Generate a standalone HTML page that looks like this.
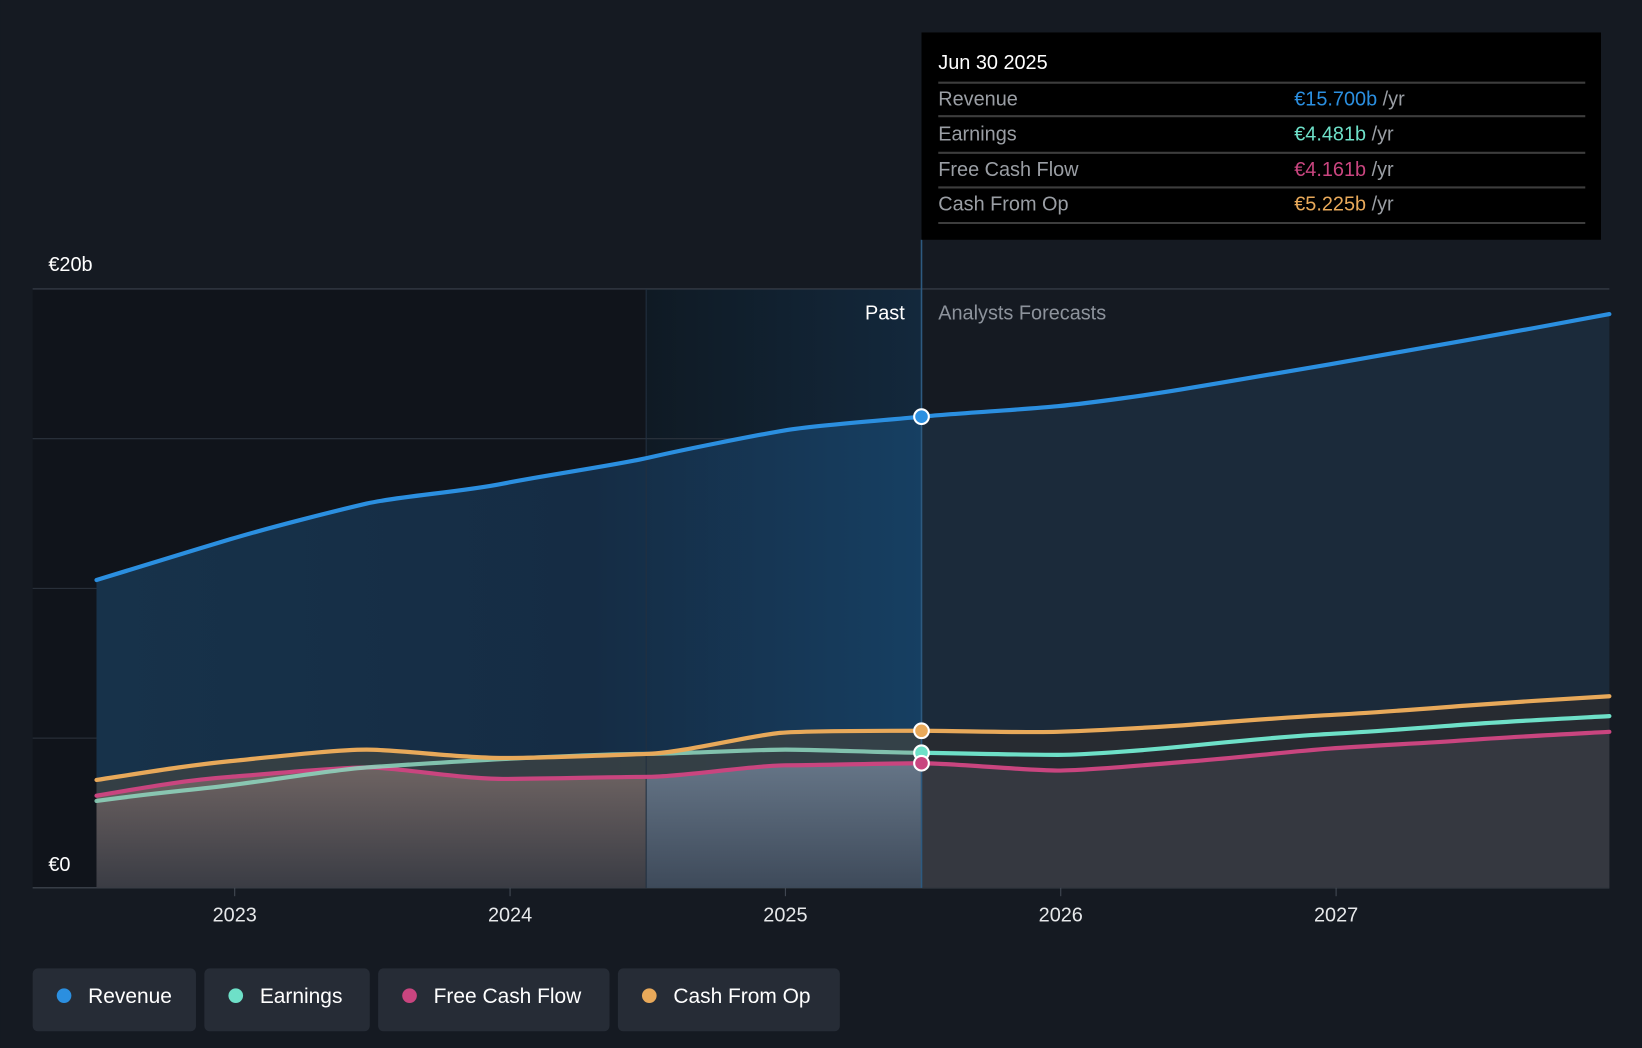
<!DOCTYPE html>
<html><head><meta charset="utf-8"><style>
html,body{margin:0;padding:0;background:#151a22;}
svg{display:block;font-family:"Liberation Sans",sans-serif;}
</style></head><body>
<svg width="1642" height="1048" viewBox="0 0 1568 1001" xmlns="http://www.w3.org/2000/svg">
<defs>
<linearGradient id="pg" x1="0" x2="1" y1="0" y2="0"><stop offset="0" stop-color="#0f1a24"/><stop offset="1" stop-color="#13283c"/></linearGradient>
<linearGradient id="rg" x1="92" x2="880" y1="0" y2="0" gradientUnits="userSpaceOnUse"><stop offset="0" stop-color="#17324a"/><stop offset="0.6" stop-color="#152c44"/><stop offset="1" stop-color="#163f62"/></linearGradient>
<linearGradient id="lg" x1="0" x2="0" y1="720" y2="848" gradientUnits="userSpaceOnUse"><stop offset="0" stop-color="#746866"/><stop offset="1" stop-color="#3a3c44"/></linearGradient>
<linearGradient id="lb" x1="0" x2="0" y1="720" y2="848" gradientUnits="userSpaceOnUse"><stop offset="0" stop-color="#68788a"/><stop offset="1" stop-color="#3e4a5a"/></linearGradient>
<clipPath id="p1"><rect x="0" y="0" width="617" height="1001"/></clipPath>
<clipPath id="p2"><rect x="617" y="0" width="263" height="1001"/></clipPath>
<clipPath id="past"><rect x="0" y="0" width="880" height="1001"/></clipPath>
<clipPath id="fut"><rect x="880" y="0" width="700" height="1001"/></clipPath>
<path id="rev" d="M92,554 L220,515 L350,481 L480,462 L620,437 L750,411 L880,398 L1010,388 L1140,370 L1270,348 L1400,325 L1537,300 L1537,848 L92,848Z"/>
<path id="cfo" d="M92,745 L220,727 L350,716 L480,724 L620,720 L745,700 L880,698 L1010,699 L1140,692 L1270,683 L1400,674 L1537,665 L1537,848 L92,848Z"/>
<path id="fcf" d="M92,760 L220,742 L350,733 L480,744 L620,742 L750,731 L880,729 L1010,736 L1140,727 L1270,715 L1400,707 L1537,699 L1537,848 L92,848Z"/>
</defs>
<rect width="1568" height="1001" fill="#151a22"/>
<rect x="31" y="276" width="586" height="572" fill="#10141b"/>
<rect x="617" y="276" width="263" height="572" fill="url(#pg)"/>
<g stroke="#2c333e" stroke-width="1">
<line x1="31" y1="276" x2="1537" y2="276" stroke="#3a414c"/>
<line x1="31" y1="419" x2="1537" y2="419"/>
<line x1="31" y1="562" x2="1537" y2="562"/>
<line x1="31" y1="705" x2="1537" y2="705"/>
<line x1="31" y1="848" x2="1537" y2="848" stroke="#444b55"/>
</g>
<use href="#rev" clip-path="url(#past)" fill="url(#rg)"/>
<use href="#rev" clip-path="url(#fut)" fill="#1b2a3a"/>
<use href="#cfo" clip-path="url(#past)" fill="#3a4244" opacity="0.85"/>
<use href="#cfo" clip-path="url(#fut)" fill="#272b31"/>
<use href="#fcf" clip-path="url(#p1)" fill="url(#lg)"/>
<use href="#fcf" clip-path="url(#p2)" fill="url(#lb)"/>
<use href="#fcf" clip-path="url(#fut)" fill="#353840"/>
<line x1="880" y1="229" x2="880" y2="848" stroke="#2d5a80" stroke-width="1.5"/>
<line x1="617" y1="276" x2="617" y2="848" stroke="#223040" stroke-width="1"/>
<g stroke="#444b55" stroke-width="1"><line x1="224" y1="848" x2="224" y2="856"/><line x1="487" y1="848" x2="487" y2="856"/><line x1="750" y1="848" x2="750" y2="856"/><line x1="1013" y1="848" x2="1013" y2="856"/><line x1="1276" y1="848" x2="1276" y2="856"/></g>
<g fill="none" stroke-width="4" stroke-linejoin="round" stroke-linecap="round">
<path d="M92,760 C150,750 180,745 220,742 S320,733 350,733 S440,744 480,744 S590,742 620,742 S720,731 750,731 S850,729 880,729 S980,736 1010,736 S1100,730 1140,727 S1230,718 1270,715 S1360,710 1400,707 S1500,701 1537,699" stroke="#c9457f"/>
<path clip-path="url(#past)" d="M92,765 C150,757 180,755 220,750 S320,735 350,733 S440,727 480,725 S590,720 620,720 S720,716 750,716 S850,719 880,719" stroke="#8fd8c0" opacity="0.85"/>
<path d="M880,719 S980,721 1010,721 S1100,716 1140,712 S1230,703 1270,701 S1360,695 1400,692 S1500,686 1537,684" stroke="#6ee0c8"/>
<path d="M92,745 C150,736 180,731 220,727 S320,716 350,716 S440,724 480,724 S590,721 620,720 S720,702 745,700 S850,698 880,698 S980,700 1010,699 S1100,695 1140,692 S1230,685 1270,683 S1360,677 1400,674 S1500,667 1537,665" stroke="#e8a95a"/>
<path d="M92,554 C150,536 180,527 220,515 S320,488 350,481 S440,470 480,462 S590,444 620,437 S720,416 750,411 S850,401 880,398 S980,391 1010,388 S1100,377 1140,370 S1230,355 1270,348 S1360,332 1400,325 S1500,307 1537,300" stroke="#2b8fe0"/>
</g>
<circle cx="880" cy="398" r="7" fill="#2b8fe0" stroke="#fff" stroke-width="2"/>
<circle cx="880" cy="698" r="7" fill="#e8a95a" stroke="#fff" stroke-width="2"/>
<circle cx="880" cy="719" r="7" fill="#6ee0c8" stroke="#fff" stroke-width="2"/>
<circle cx="880" cy="729" r="7" fill="#c9457f" stroke="#fff" stroke-width="2"/>
<g font-size="19" fill="#fff">
<text x="46" y="259">€20b</text>
<text x="46" y="832">€0</text>
<text x="864" y="305" text-anchor="end">Past</text>
<text x="896" y="305" fill="#8d939c">Analysts Forecasts</text>
<g text-anchor="middle" fill="#e6e8ea"><text x="224" y="880">2023</text><text x="487" y="880">2024</text><text x="750" y="880">2025</text><text x="1013" y="880">2026</text><text x="1276" y="880">2027</text></g>
</g>
<rect x="880" y="31" width="649" height="198" fill="#000"/>
<g stroke="#3d3d3d" stroke-width="2"><line x1="896" y1="79" x2="1514" y2="79"/><line x1="896" y1="111" x2="1514" y2="111"/><line x1="896" y1="146" x2="1514" y2="146"/><line x1="896" y1="179" x2="1514" y2="179"/><line x1="896" y1="213" x2="1514" y2="213"/></g>
<g font-size="19">
<text x="896" y="66" fill="#fff">Jun 30 2025</text>
<text x="896" y="101" fill="#9a9ea4">Revenue</text>
<text x="896" y="134" fill="#9a9ea4">Earnings</text>
<text x="896" y="168" fill="#9a9ea4">Free Cash Flow</text>
<text x="896" y="201" fill="#9a9ea4">Cash From Op</text>
<text x="1236" y="101"><tspan fill="#2b8fe0">€15.700b</tspan><tspan fill="#9a9ea4"> /yr</tspan></text>
<text x="1236" y="134"><tspan fill="#6ee0c8">€4.481b</tspan><tspan fill="#9a9ea4"> /yr</tspan></text>
<text x="1236" y="168"><tspan fill="#c9457f">€4.161b</tspan><tspan fill="#9a9ea4"> /yr</tspan></text>
<text x="1236" y="201"><tspan fill="#e8a95a">€5.225b</tspan><tspan fill="#9a9ea4"> /yr</tspan></text>
</g>
<g font-size="20" fill="#fff">
<rect x="31" y="925" width="156" height="60" rx="5" fill="#262c36"/><circle cx="61" cy="951" r="7" fill="#2b8fe0"/><text x="84" y="958">Revenue</text>
<rect x="195" y="925" width="158" height="60" rx="5" fill="#262c36"/><circle cx="225" cy="951" r="7" fill="#6ee0c8"/><text x="248" y="958">Earnings</text>
<rect x="361" y="925" width="221" height="60" rx="5" fill="#262c36"/><circle cx="391" cy="951" r="7" fill="#c9457f"/><text x="414" y="958">Free Cash Flow</text>
<rect x="590" y="925" width="212" height="60" rx="5" fill="#262c36"/><circle cx="620" cy="951" r="7" fill="#e8a95a"/><text x="643" y="958">Cash From Op</text>
</g>
</svg>
</body></html>
